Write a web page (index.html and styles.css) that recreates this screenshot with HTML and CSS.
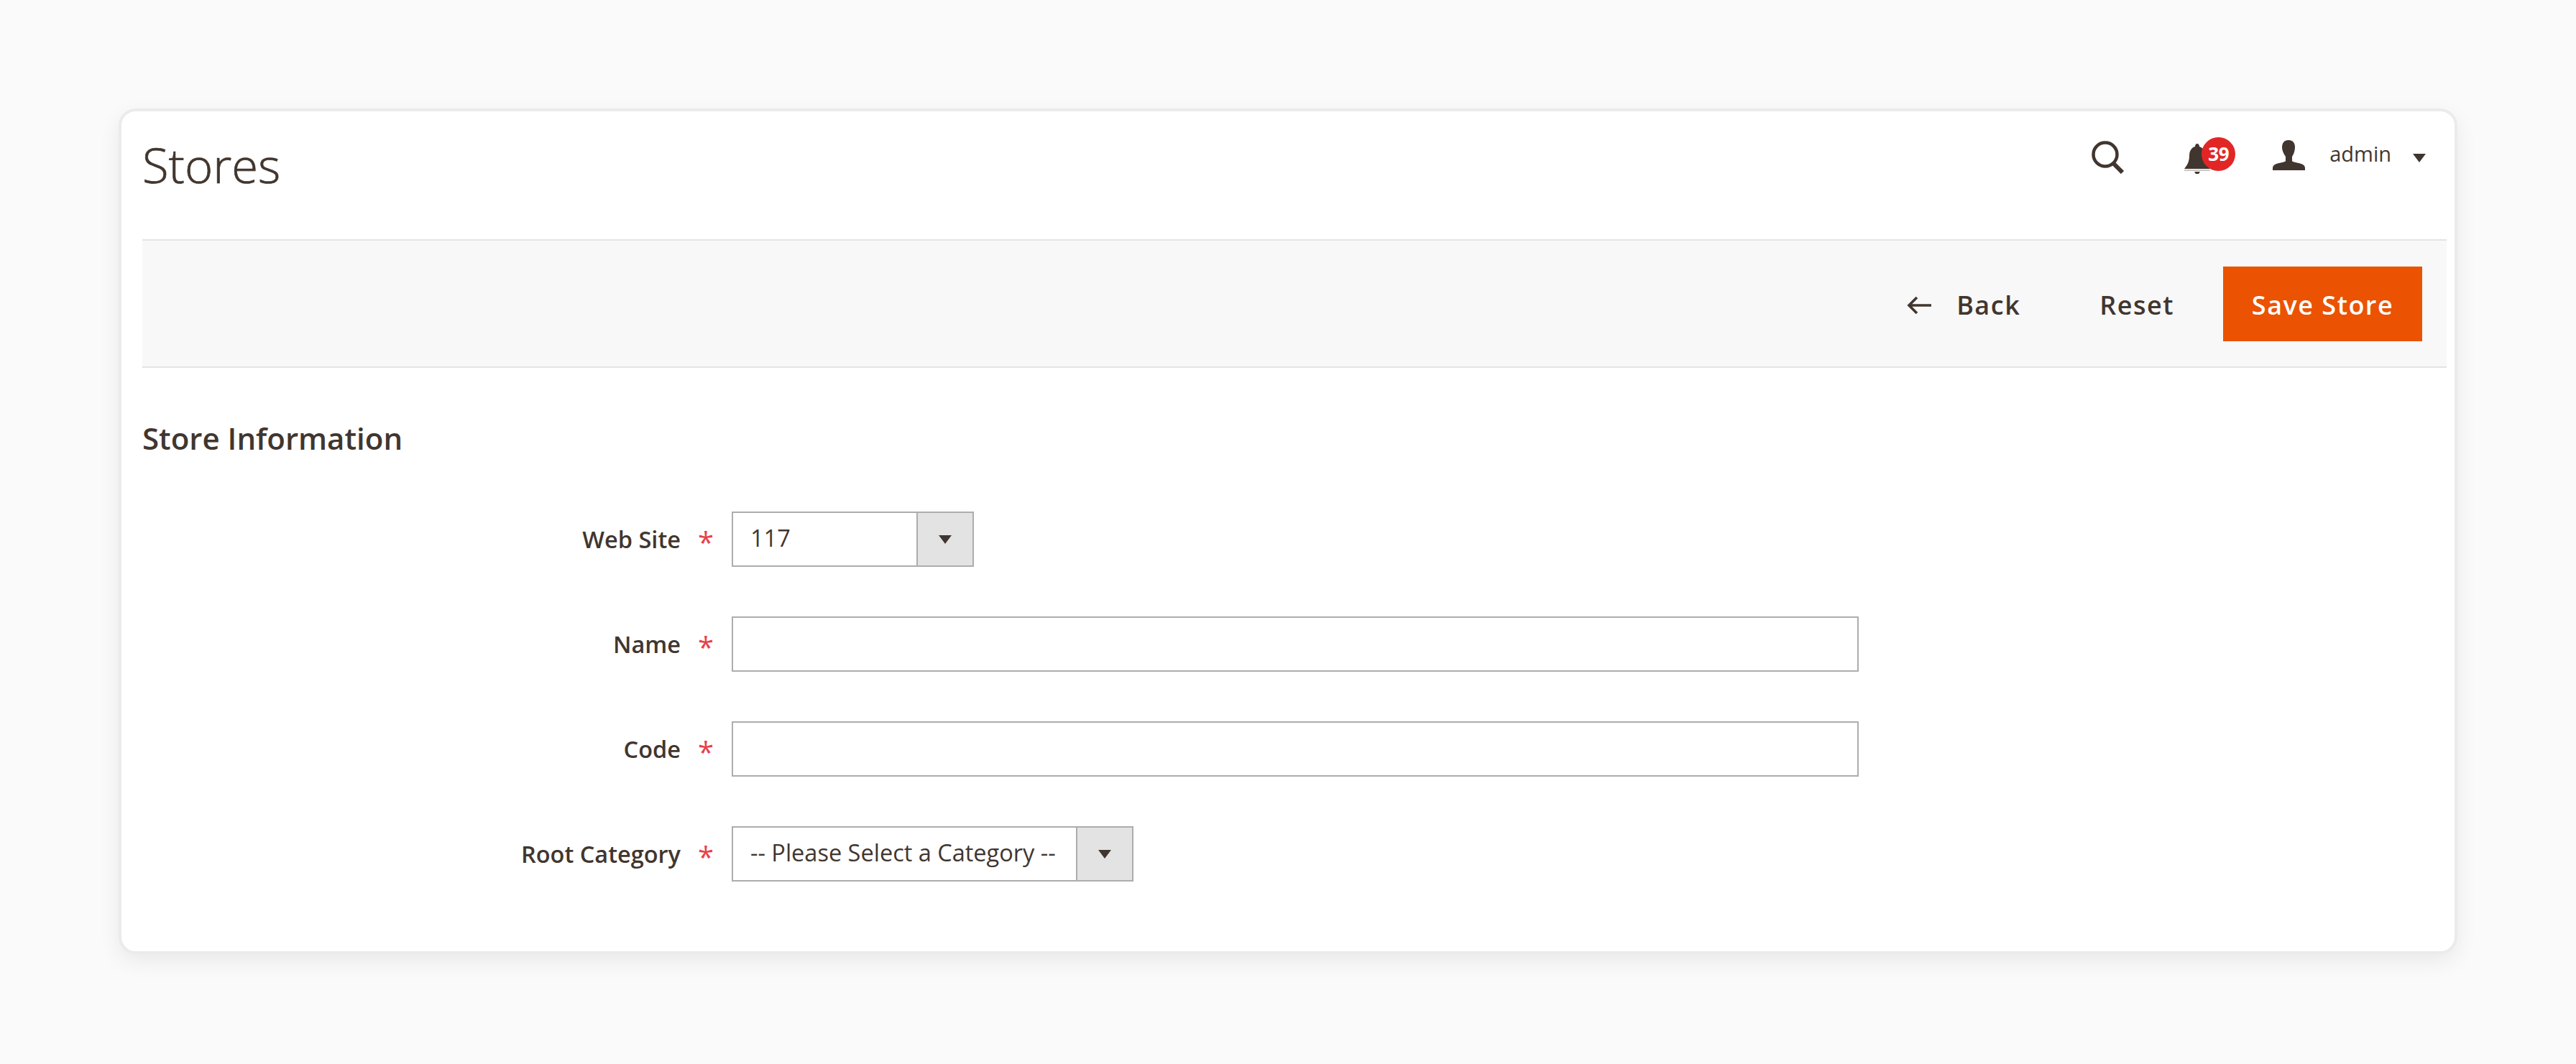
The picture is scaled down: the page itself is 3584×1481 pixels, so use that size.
FILE: index.html
```html
<!DOCTYPE html>
<html lang="en">
<head>
<meta charset="utf-8">
<title>Stores</title>
<link rel="stylesheet" href="styles.css">
</head>
<body>
<main class="card">
  <header class="top">
    <h1 class="title">Stores</h1>
    <div class="actions">
      <svg class="i-search" viewBox="0 0 47 46" aria-hidden="true"><circle cx="20" cy="19" r="16.5" fill="none" stroke="#41362f" stroke-width="4.5"/><path d="M31 31 L44 44" stroke="#41362f" stroke-width="6" fill="none"/></svg>
      <div class="bell">
        <svg class="i-bell" viewBox="0 0 36 42" aria-hidden="true"><path d="M18 0c2 0 3 2 3 4 6 2 8 7 8 13 0 8 3 13 7 18H0c4-5 7-10 7-18C7 11 9 6 15 4c0-2 1-4 3-4z" fill="#41362f"/><path d="M0 36h36v2H0z" fill="#c9c6c4"/><path d="M14 39h8l-2 3h-4z" fill="#41362f"/></svg>
        <span class="badge">39</span>
      </div>
      <svg class="i-user" viewBox="0 0 45 42" aria-hidden="true"><path d="M22 0c6 0 9 4 9 10 0 5-2 10-4 13v6c1 2 9 2 15 5 2 1 3 3 3 5v3H0v-3c0-2 1-4 3-5 6-3 14-3 15-5v-6c-2-3-5-8-5-13C13 4 16 0 22 0z" fill="#41362f"/></svg>
      <span class="user">admin</span>
      <span class="caret caret-user"></span>
    </div>
  </header>
  <div class="toolbar">
    <a class="tool back"><svg class="i-back" viewBox="0 0 36 26" aria-hidden="true"><path d="M34 13H4M14 2 3 13l11 11" fill="none" stroke="#41362f" stroke-width="3.6"/></svg>Back</a>
    <a class="tool reset">Reset</a>
    <button class="save" type="button">Save Store</button>
  </div>
  <section class="form">
    <h2 class="section">Store Information</h2>
    <div class="row">
      <label class="label">Web Site</label><span class="star">*</span>
      <div class="select site"><span class="val v117">117</span><span class="arrow"><span class="caret"></span></span></div>
    </div>
    <div class="row">
      <label class="label">Name</label><span class="star">*</span>
      <input class="input" type="text">
    </div>
    <div class="row">
      <label class="label">Code</label><span class="star">*</span>
      <input class="input" type="text">
    </div>
    <div class="row">
      <label class="label">Root Category</label><span class="star">*</span>
      <div class="select root"><span class="val">-- Please Select a Category --</span><span class="arrow"><span class="caret"></span></span></div>
    </div>
  </section>
</main>
</body>
</html>
```
FILE: styles.css
```css
* { box-sizing: border-box; }
html, body { margin: 0; height: 100%; }
body {
  background: #fafafa;
  font-family: "Open Sans", sans-serif;
  color: #41362f;
  padding: 151px 0 0 165px;
  overflow: hidden;
}
.card {
  width: 3254px;
  height: 1177px;
  background: #fff;
  border: 4px solid #ebebeb;
  border-radius: 24px;
  padding: 0 11px 0 29px;
  box-shadow: 0 10px 30px rgba(0, 0, 0, 0.07);
}
.top {
  height: 178px;
  display: flex;
  justify-content: space-between;
  align-items: flex-start;
}
.title {
  margin: 29px 0 0 0;
  font-size: 67px;
  line-height: 90px;
  font-weight: 300;
  -webkit-text-stroke: 0.7px #41362f;
}
.actions {
  display: flex;
  align-items: flex-start;
  padding: 36px 29px 0 0;
}
.i-search { width: 47px; height: 46px; margin-top: 5px; }
.bell { position: relative; width: 36px; height: 42px; margin: 9px 0 0 83px; }
.i-bell { display: block; width: 36px; height: 42px; }
.badge {
  position: absolute;
  left: 24px;
  top: -9px;
  width: 47px;
  height: 47px;
  border-radius: 50%;
  background: #e22626;
  color: #fff;
  font-size: 26px;
  font-weight: 700;
  line-height: 47px;
  text-align: center;
  letter-spacing: -0.5px;
}
.i-user { width: 45px; height: 42px; margin: 4px 0 0 87px; }
.user {
  margin: 3px 0 0 34px;
  font-size: 29px;
  line-height: 40px;
}
.caret {
  display: block;
  width: 0;
  height: 0;
  border-left: 9px solid transparent;
  border-right: 9px solid transparent;
  border-top: 12px solid #41362f;
}
.caret-user { margin: 23px 0 0 30px; }
.toolbar {
  height: 179px;
  background: #f8f8f8;
  border-top: 2px solid #e4e4e4;
  border-bottom: 2px solid #e4e4e4;
  display: flex;
  justify-content: flex-end;
  align-items: flex-start;
  padding: 36px 34px 0 0;
}
.tool {
  font-size: 36px;
  font-weight: 600;
  line-height: 104px;
  padding-top: 2px;
  letter-spacing: 1.5px;
  color: #41362f;
  display: flex;
  align-items: center;
}
.i-back { width: 36px; height: 26px; margin-right: 33px; }
.reset { margin-left: 110px; }
.save {
  margin-left: 68px;
  width: 277px;
  height: 104px;
  border: 0;
  padding: 3px 0 0;
  background: #eb5202;
  color: #fff;
  font: 600 36px "Open Sans", sans-serif;
  letter-spacing: 1.5px;
}
.form { padding-top: 69px; }
.section {
  margin: 0 0 73px 0;
  font-size: 42px;
  font-weight: 600;
  line-height: 58px;
}
.row {
  display: flex;
  align-items: center;
  height: 77px;
  margin-bottom: 69px;
}
.label {
  width: 749px;
  text-align: right;
  font-size: 32.5px;
  font-weight: 600;
}
.star {
  width: 71px;
  padding-left: 24px;
  color: #e8404a;
  font-size: 40px;
  line-height: 36px;
  height: 28px;
}
.input, .select {
  height: 77px;
  background: #fff;
  border: 2px solid #adadad;
}
.input { width: 1568px; padding: 0; }
.select { display: flex; align-items: stretch; }
.site { width: 337px; }
.root { width: 559px; }
.val {
  flex: 1;
  padding: 0 0 6px 24px;
  font-size: 32.5px;
  line-height: 70px;
  white-space: nowrap;
}
.arrow {
  width: 78px;
  background: #e3e3e3;
  border-left: 2px solid #adadad;
  display: flex;
  align-items: center;
  justify-content: center;
}
```
